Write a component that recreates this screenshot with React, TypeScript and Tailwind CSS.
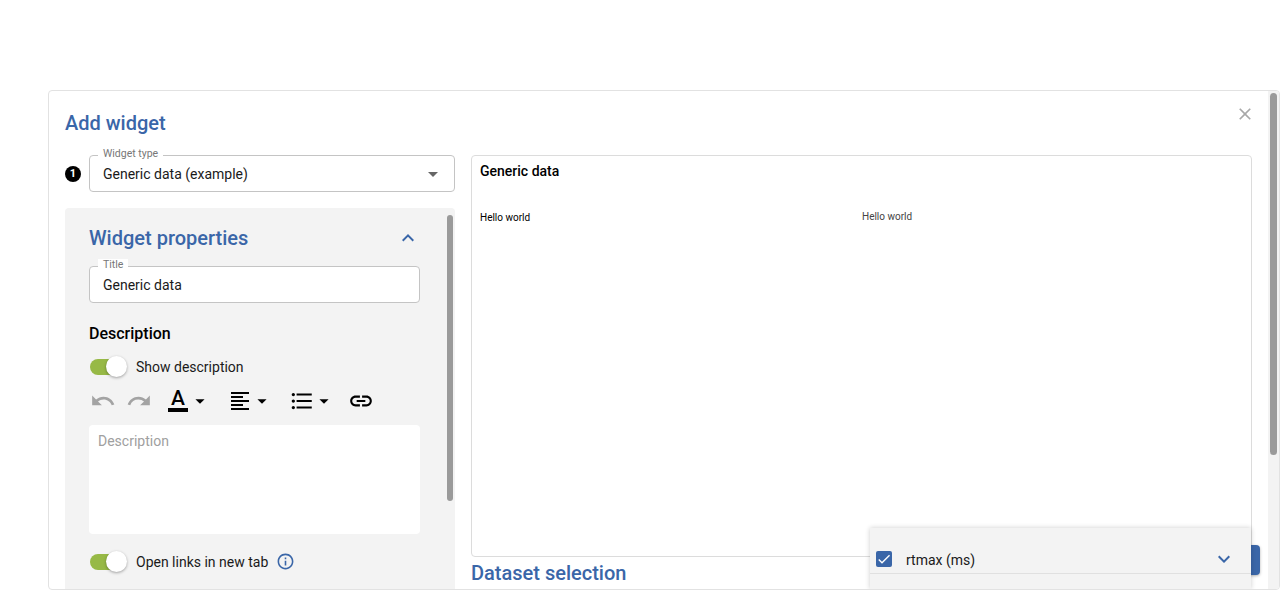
import React from "react";
import {
  MdArrowDropDown,
  MdCheck,
  MdClose,
  MdExpandLess,
  MdExpandMore,
  MdFormatAlignLeft,
  MdFormatListBulleted,
  MdInfoOutline,
  MdLink,
  MdRedo,
  MdUndo,
} from "react-icons/md";

const OutlinedField: React.FC<{ label: string; value: string; children?: React.ReactNode; className?: string }> = ({
  label,
  value,
  children,
  className,
}) => (
  <div className={`relative flex h-[37px] items-center justify-between rounded border border-[#c4c4c4] bg-white pl-[13px] pr-[14px] ${className ?? ""}`}>
    <span className="absolute -top-[8px] left-[8px] bg-white px-[5px] text-[10.5px] leading-[12px] text-[#777]">{label}</span>
    <span className="text-sm text-[#1a1a1a]">{value}</span>
    {children}
  </div>
);

const Toggle: React.FC = () => (
  <div className="relative h-[16px] w-[37px]">
    <div className="h-[16px] w-[32px] rounded-full bg-[#97b946]" />
    <div className="absolute -top-[3px] right-0 h-[21px] w-[21px] rounded-full bg-white shadow-[0_1px_3px_rgba(0,0,0,0.35)]" />
  </div>
);

const Toolbar: React.FC = () => (
  <div className="mt-[13px] flex h-[24px] items-center">
    <MdUndo className="ml-[1px] text-[#a3a3a3]" size={26} />
    <MdRedo className="ml-[10px] text-[#a3a3a3]" size={26} />
    <div className="ml-[16px] flex w-[20px] flex-col items-center">
      <span className="h-[17px] text-[21px] font-medium leading-[17px] text-black">A</span>
      <div className="mt-[1px] h-[4px] w-[20px] bg-black" />
    </div>
    <MdArrowDropDown className="ml-[1px] text-black" size={22} />
    <MdFormatAlignLeft className="ml-[17px] text-black" size={24} />
    <MdArrowDropDown className="-ml-[1px] text-black" size={22} />
    <MdFormatListBulleted className="ml-[16px] text-black" size={26} />
    <MdArrowDropDown className="-ml-[2px] text-black" size={22} />
    <MdLink className="ml-[13px] text-black" size={26} />
  </div>
);

export default function App() {
  return (
    <div className="h-[590px] w-[1280px] overflow-hidden bg-white pl-[48px] pt-[90px] font-['Roboto',sans-serif]">
      <div className="relative flex h-[500px] w-[1232px] flex-col overflow-hidden rounded-[4px] border border-[#e2e2e2] bg-white pl-[16px] pt-[20px]">
        <h2 className="h-[24px] text-[20px] font-medium leading-[24px] text-[#3a66a8]">Add widget</h2>
        <MdClose className="absolute right-[24px] top-[13px] text-[#a8a8a8]" size={20} />

        <div className="mt-[20px] flex gap-[16px]">
          <div className="w-[390px]">
            <div className="flex items-center">
              <div className="flex h-[16px] w-[16px] items-center justify-center rounded-full bg-black text-[11px] font-bold leading-none text-white">1</div>
              <OutlinedField label="Widget type" value="Generic data (example)" className="ml-[8px] w-[366px]">
                <MdArrowDropDown className="-mr-[5px] text-[#666]" size={24} />
              </OutlinedField>
            </div>

            <div className="relative mt-[16px] h-[400px] rounded-t bg-[#f3f3f3] pl-[24px] pr-[35px] pt-[18px]">
              <div className="absolute right-[2px] top-[7px] h-[286px] w-[6px] rounded-full bg-[#9a9a9a]" />
              <div className="flex h-[24px] items-center justify-between">
                <h3 className="text-[20px] font-medium leading-[24px] text-[#3a66a8]">Widget properties</h3>
                <MdExpandLess className="text-[#3a66a8]" size={24} />
              </div>
              <OutlinedField label="Title" value="Generic data" className="mt-[16px]" />
              <h4 className="mt-[21px] text-base font-medium leading-[19px] text-black">Description</h4>
              <div className="mt-[14px] flex h-[19px] items-center gap-[9px] pl-[1px]">
                <Toggle />
                <span className="text-sm text-[#1a1a1a]">Show description</span>
              </div>
              <Toolbar />
              <div className="mt-[12px] h-[109px] rounded bg-white px-[9px] pt-[6px] text-sm text-[#a0a0a0]">Description</div>
              <div className="mt-[18px] flex h-[19px] items-center gap-[9px] pl-[1px]">
                <Toggle />
                <span className="text-sm text-[#1a1a1a]">Open links in new tab</span>
                <MdInfoOutline className="-ml-[1px] text-[#3a66a8]" size={19} />
              </div>
            </div>
          </div>

          <div className="w-[781px]">
            <div className="h-[402px] rounded border border-[#dcdcdc] px-[8px] pt-[7px]">
              <div className="text-sm font-medium leading-[16px] text-black">Generic data</div>
              <div className="mt-[33px] flex text-[10px] leading-[12px]">
                <span className="w-[382px] text-black">Hello world</span>
                <span className="-mt-[1px] text-[#444]">Hello world</span>
              </div>
            </div>
            <h3 className="mt-[4px] text-[20px] font-medium leading-[24px] text-[#3a66a8]">Dataset selection</h3>
          </div>
        </div>

        <div className="absolute bottom-[14px] right-[19px] h-[30px] w-[20px] rounded bg-[#3a66a8] shadow-[0_1px_3px_rgba(0,0,0,0.3)]" />

        <div className="absolute bottom-0 right-[28px] h-[61px] w-[381px] bg-[#f3f3f3] shadow-[0_0_5px_rgba(0,0,0,0.2)]">
          <div className="flex h-[46px] items-end border-b border-[#e0e0e0] pb-[6px] pl-[6px] pr-[15px]">
            <div className="flex h-[16px] w-[16px] items-center justify-center rounded-[2px] bg-[#3a66a8]">
              <MdCheck className="text-white" size={16} />
            </div>
            <span className="-mb-[3px] ml-[14px] flex-1 text-sm leading-[20px] text-[#1a1a1a]">rtmax (ms)</span>
            <MdExpandMore className="-mb-[4px] text-[#3a66a8]" size={24} />
          </div>
        </div>

        <div className="absolute bottom-0 right-0 top-0 w-[11px] bg-[#f3f3f3]">
          <div className="ml-[2px] mt-[2px] h-[362px] w-[7px] rounded-full bg-[#9a9a9a]" />
        </div>
      </div>
    </div>
  );
}
